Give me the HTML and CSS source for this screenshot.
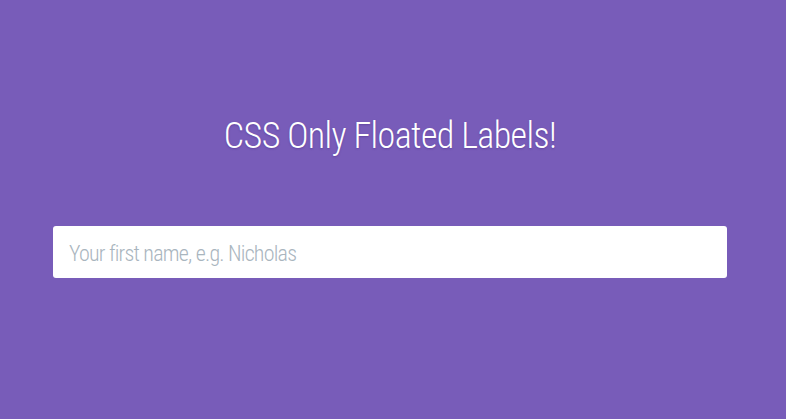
FILE: index.html
```html
<!DOCTYPE html>
<html>
<head>
<meta charset="utf-8">
<link rel="stylesheet" href="styles.css">
</head>
<body>
<main class="page">
  <h1 class="title">CSS Only Floated Labels!</h1>
  <form class="form">
    <label class="field">
      <input class="field-input" type="text" placeholder="Your first name, e.g. Nicholas">
    </label>
  </form>
</main>
</body>
</html>
```

FILE: styles.css
```css
html, body {
  margin: 0;
  padding: 0;
  height: 100%;
}
body {
  background: #785cb9;
  font-family: "Roboto", "Liberation Sans", sans-serif;
  font-stretch: condensed;
}
.page {
  display: flex;
  flex-direction: column;
  padding: 114px 59px 0 53px;
}
.title {
  margin: 0;
  text-align: center;
  color: #fff;
  font-weight: 300;
  font-stretch: condensed;
  font-size: 36px;
  line-height: 44px;
  letter-spacing: -0.6px;
  text-shadow: 0 1px 2px rgba(60, 30, 120, 0.35);
}
.form {
  margin: 68px 0 0;
}
.field {
  display: block;
}
.field-input {
  display: block;
  box-sizing: border-box;
  width: 100%;
  height: 52px;
  border: 0;
  border-radius: 3px;
  background: #fff;
  padding: 2px 16px 0;
  font-family: "Roboto", "Liberation Sans", sans-serif;
  font-stretch: condensed;
  font-weight: 300;
  font-size: 22px;
  letter-spacing: -0.78px;
  color: #444;
  outline: none;
}
.field-input::placeholder {
  color: #a9b5be;
  opacity: 1;
}
```
